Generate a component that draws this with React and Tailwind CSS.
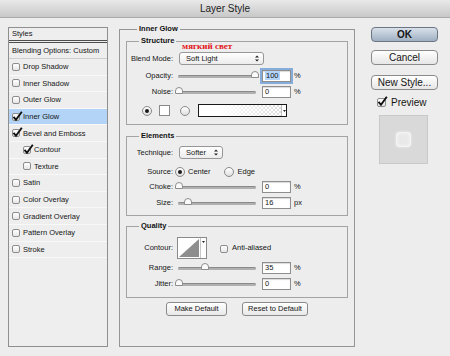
import React from "react";

const items = [
  { label: "Drop Shadow" },
  { label: "Inner Shadow" },
  { label: "Outer Glow" },
  { label: "Inner Glow", checked: true, active: true },
  { label: "Bevel and Emboss", checked: true },
  { label: "Contour", checked: true, indent: true },
  { label: "Texture", indent: true },
  { label: "Satin" },
  { label: "Color Overlay" },
  { label: "Gradient Overlay" },
  { label: "Pattern Overlay" },
  { label: "Stroke" },
];

function Check({ checked, size = "w-[8px] h-[8px]" }) {
  return (
    <span
      className={`relative inline-block shrink-0 rounded-[2px] border border-[#8d8d8d] bg-gradient-to-b from-white to-[#e6e6e6] ${size}`}
    >
      {checked && (
        <svg className="absolute -left-[1px] -top-[3px]" width="11" height="11" viewBox="0 0 11 11">
          <path d="M1.5 5.8 L4 8.8 L9.8 0.8" fill="none" stroke="#111" strokeWidth="1.9" />
        </svg>
      )}
    </span>
  );
}

function Radio({ on }) {
  return (
    <span className="flex shrink-0 items-center justify-center w-[10px] h-[10px] rounded-full border border-[#8a8a8a] bg-gradient-to-b from-white to-[#dedede]">
      {on && <span className="w-[4px] h-[4px] rounded-full bg-[#1c1c1c]" />}
    </span>
  );
}

function Slider({ thumb }) {
  return (
    <div className="relative w-[78px] h-[12px] flex items-center">
      <div className="w-full h-[3px] rounded-full bg-[#b0b0b0] border-t border-[#8a8a8a]" />
      <svg className={`absolute top-[1px] ${thumb}`} width="8" height="8" viewBox="0 0 8 8">
        <path d="M0.5 6.5 L0.5 4 A3.5 3.5 0 0 1 7.5 4 L7.5 6.5 Z" fill="#fbfbfb" stroke="#8c8c8c" />
      </svg>
    </div>
  );
}

function Num({ value, unit, focus }) {
  return (
    <div className="flex items-center ml-[6px]">
      <div
        className={`w-[29px] h-[12px] bg-white border border-[#8e8e8e] shadow-[inset_0_1px_1px_rgba(0,0,0,0.15)] text-[7.5px] leading-[10px] pl-[2px] ${
          focus ? "ring-2 ring-[#86acd9]" : ""
        }`}
      >
        {focus ? <span className="bg-[#b4d3f8] px-[1px]">{value}</span> : value}
      </div>
      <span className="ml-[3px] text-[7.5px]">{unit}</span>
    </div>
  );
}

function Label({ children }) {
  return <span className="w-[46px] shrink-0 text-right text-[7.5px] leading-[10px] mr-[5px]">{children}</span>;
}

function Select({ value, width }) {
  return (
    <div
      className={`ml-[1px] h-[13px] flex items-center justify-between rounded-[3px] border border-[#979797] bg-gradient-to-b from-white to-[#ececec] pl-[6px] pr-[4px] text-[7.5px] ${width}`}
    >
      <span>{value}</span>
      <svg width="4" height="7" viewBox="0 0 4 7">
        <path d="M0 2.6 L2 0.4 L4 2.6 Z M0 4.4 L2 6.6 L4 4.4 Z" fill="#222" />
      </svg>
    </div>
  );
}

function Btn({ children, w, bold }) {
  return (
    <div
      className={`h-[15px] flex items-center justify-center rounded-[4px] border border-[#8a8a8a] bg-gradient-to-b from-white to-[#e6e6e6] text-[10px] ${w} ${
        bold ? "font-bold" : ""
      }`}
    >
      {children}
    </div>
  );
}

function Legend({ children, ml }) {
  return <legend className={`${ml} px-[2px] text-[7.5px] font-bold leading-[10px] text-[#111]`}>{children}</legend>;
}

export default function App() {
  return (
    <div className="w-[450px] h-[356px] overflow-hidden bg-[#ededed] text-[#151515] font-['Liberation_Sans',Arial,sans-serif]">
      {/* title bar */}
      <div className="h-[18px] flex items-center justify-center border-b border-[#a9a9a9] bg-gradient-to-b from-[#e9e9e9] to-[#c8c8c8] text-[10px] text-[#222]">
        Layer Style
      </div>

      <div className="flex pl-[8px] pt-[6px]">
        {/* styles list */}
        <div className="mt-[3px] w-[100px] h-[320px] border border-[#8f8f8f] bg-[#eeeeee] text-[7.5px]">
          <div className="h-[15px] flex items-center pl-[3px] border-b-[3px] border-double border-[#4d4d4d]">Styles</div>
          <div className="h-[16px] flex items-center pl-[3px] border-b border-[#cfcfcf]">Blending Options: Custom</div>
          {items.map((it) => (
            <div
              key={it.label}
              className={`h-[16.6px] flex items-center gap-[3px] border-b border-[#f8f8f8] ${it.indent ? "pl-[14px]" : "pl-[3px]"} ${
                it.active ? "bg-[#b3d4f6]" : ""
              }`}
            >
              <Check checked={it.checked} />
              <span>{it.label}</span>
            </div>
          ))}
        </div>

        {/* main panel */}
        <fieldset className="ml-[11px] w-[236px] h-[323px] border border-[#959595] px-[6px] pt-[2px]">
          <Legend ml="ml-[11px]">Inner Glow</Legend>

          {/* Structure */}
          <fieldset className="border border-[#a3a3a3] pt-[6px] pb-[7px]">
            <Legend ml="ml-[12px]">Structure</Legend>
            <div className="relative h-[13px] flex items-center">
              <span className="absolute left-[55px] -top-[11px] text-[9px] leading-[10px] font-bold text-[#e2161b] font-['Liberation_Serif',serif]">
                мягкий свет
              </span>
              <Label>Blend Mode:</Label>
              <Select value="Soft Light" width="w-[85px]" />
            </div>
            <div className="mt-[5px] h-[12px] flex items-center">
              <Label>Opacity:</Label>
              <Slider thumb="left-[73px]" />
              <Num value="100" unit="%" focus />
            </div>
            <div className="mt-[4px] h-[12px] flex items-center">
              <Label>Noise:</Label>
              <Slider thumb="-left-[3px]" />
              <Num value="0" unit="%" />
            </div>
            <div className="mt-[6px] h-[13px] flex items-center pl-[15px]">
              <Radio on />
              <span className="ml-[7px] w-[11px] h-[11px] bg-white border border-[#8a8a8a]" />
              <span className="ml-[10px]">
                <Radio />
              </span>
              <div className="ml-[8px] flex h-[13px] border border-[#1a1a1a]">
                <div className="relative w-[82px] h-full bg-[repeating-conic-gradient(#dcdcdc_0%_25%,#ffffff_0%_50%)] bg-[length:4px_4px]">
                  <div className="absolute inset-0 bg-gradient-to-r from-white from-20% to-transparent" />
                </div>
                <div className="w-[5px] h-full bg-white border-l border-[#bdbdbd] flex items-center justify-center">
                  <svg width="3" height="2" viewBox="0 0 3 2">
                    <path d="M0 0 L3 0 L1.5 2 Z" fill="#222" />
                  </svg>
                </div>
              </div>
            </div>
          </fieldset>

          {/* Elements */}
          <fieldset className="mt-[6px] border border-[#a3a3a3] pt-[5px] pb-[6px]">
            <Legend ml="ml-[12px]">Elements</Legend>
            <div className="h-[13px] flex items-center">
              <Label>Technique:</Label>
              <Select value="Softer" width="w-[44px]" />
            </div>
            <div className="mt-[8px] h-[10px] flex items-center text-[7.5px]">
              <span className="w-[46px] shrink-0 text-right mr-[2px]">Source:</span>
              <Radio on />
              <span className="ml-[3px]">Center</span>
              <span className="ml-[13px]">
                <Radio />
              </span>
              <span className="ml-[4px]">Edge</span>
            </div>
            <div className="mt-[4px] h-[12px] flex items-center">
              <Label>Choke:</Label>
              <Slider thumb="-left-[3px]" />
              <Num value="0" unit="%" />
            </div>
            <div className="mt-[4px] h-[12px] flex items-center">
              <Label>Size:</Label>
              <Slider thumb="left-[6px]" />
              <Num value="16" unit="px" />
            </div>
          </fieldset>

          {/* Quality */}
          <fieldset className="mt-[5px] border border-[#a3a3a3] pt-[6px] pb-[7px]">
            <Legend ml="ml-[12px]">Quality</Legend>
            <div className="h-[22px] flex items-center">
              <span className="w-[46px] shrink-0 text-right text-[7.5px] mr-[4px]">Contour:</span>
              <div className="flex h-[22px] border border-[#8a8a8a] bg-white">
                <svg width="22" height="20" viewBox="0 0 22 20">
                  <path d="M1 19 L21 1 L21 19 Z" fill="#8e8e8e" />
                </svg>
                <div className="w-[6px] border-l border-[#c8c8c8] flex justify-center pt-[3px]">
                  <svg width="3" height="2" viewBox="0 0 3 2">
                    <path d="M0 0 L3 0 L1.5 2 Z" fill="#222" />
                  </svg>
                </div>
              </div>
              <span className="ml-[13px]">
                <Check />
              </span>
              <span className="ml-[4px] text-[7.5px]">Anti-aliased</span>
            </div>
            <div className="mt-[3px] h-[12px] flex items-center">
              <Label>Range:</Label>
              <Slider thumb="left-[23px]" />
              <Num value="35" unit="%" />
            </div>
            <div className="mt-[4px] h-[12px] flex items-center">
              <Label>Jitter:</Label>
              <Slider thumb="-left-[3px]" />
              <Num value="0" unit="%" />
            </div>
          </fieldset>

          <div className="mt-[4px] flex justify-center gap-[15px]">
            <div className="w-[61px] h-[14px] flex items-center justify-center rounded-[3px] border border-[#8a8a8a] bg-gradient-to-b from-white to-[#e8e8e8] text-[7.5px]">
              Make Default
            </div>
            <div className="w-[66px] h-[14px] flex items-center justify-center rounded-[3px] border border-[#8a8a8a] bg-gradient-to-b from-white to-[#e8e8e8] text-[7.5px]">
              Reset to Default
            </div>
          </div>
        </fieldset>

        {/* right column */}
        <div className="ml-[16px] mt-[3px] w-[67px] flex flex-col">
          <div className="h-[15px] flex items-center justify-center rounded-[4px] border border-[#6b7685] bg-gradient-to-b from-[#d9e1ea] to-[#9fb0c2] text-[10px] font-bold">
            OK
          </div>
          <div className="mt-[8px]">
            <Btn w="w-[67px]">Cancel</Btn>
          </div>
          <div className="mt-[10px]">
            <Btn w="w-[67px]">New Style...</Btn>
          </div>
          <div className="mt-[7px] h-[11px] flex items-center pl-[6px] gap-[5px]">
            <Check checked size="w-[9px] h-[9px]" />
            <span className="text-[10px]">Preview</span>
          </div>
          <div className="mt-[7px] ml-[8px] w-[49px] h-[49px] border border-[#c9c9c9] bg-[#d9d9d9] flex items-center justify-center">
            <div className="w-[15px] h-[15px] rounded-[4px] bg-[#e9e9e9] shadow-[inset_0_0_4px_rgba(255,255,255,1),0_0_3px_rgba(255,255,255,0.6)]" />
          </div>
        </div>
      </div>
    </div>
  );
}
